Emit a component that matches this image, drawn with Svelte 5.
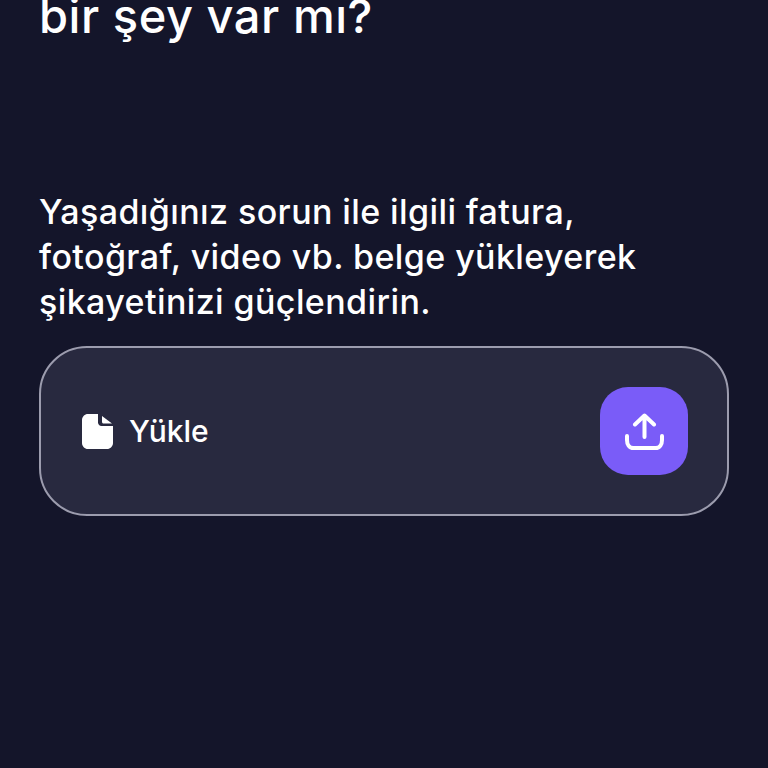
<script>
  const lines = ['Yaşadığınız sorun ile ilgili fatura,', 'fotoğraf, video vb. belge yükleyerek', 'şikayetinizi güçlendirin.'];
</script>

<main class="page">
  <h1 class="title">bir şey var mı?</h1>
  <p class="lead">
    {#each lines as line}
      <span class="line">{line}</span>
    {/each}
  </p>
  <div class="upload">
    <div class="label">
      <svg class="file" viewBox="0 0 31 35" width="31" height="35" aria-hidden="true">
        <path fill="#fff" d="M6 0H16V8.500C16 10.400 17.600 12 19.500 12H31V29C31 32.300 28.300 35 25 35H6C2.700 35 0 32.300 0 29V6C0 2.700 2.700 0 6 0Z"/>
        <path fill="#fff" d="M20 2L30 9.500H21.500C20.700 9.500 20 8.800 20 8Z"/>
      </svg>
      <span class="text">Yükle</span>
    </div>
    <button class="btn" aria-label="Yükle">
      <svg viewBox="0 0 39 37" width="39" height="37" fill="none" stroke="#fff" stroke-width="4" stroke-linecap="round" stroke-linejoin="round" aria-hidden="true">
        <path d="M19.500 24V3M10 11.500L19.500 2.500L29 11.500"/>
        <path d="M2 23V27C2 31 4 35 8.500 35H30.500C35 35 37 31 37 27V23"/>
      </svg>
    </button>
  </div>
</main>

<style>
  :global(body) {
    margin: 0;
    background: #14152a;
  }
  .page {
    height: 768px;
    box-sizing: border-box;
    padding: 0 39px;
    overflow: hidden;
    background: #14152a;
    color: #fff;
    font-family: Inter, "Noto Sans", sans-serif;
  }
  .title {
    margin: -12px 0 0;
    font-size: 47px;
    line-height: 56px;
    font-weight: 500;
    letter-spacing: 0.55px;
  }
  .lead {
    margin: 145px 0 0;
    font-size: 34px;
    line-height: 45px;
    font-weight: 500;
    letter-spacing: 0.4px;
  }
  .line {
    display: block;
    white-space: nowrap;
  }
  .upload {
    margin-top: 22px;
    height: 170px;
    width: 690px;
    box-sizing: border-box;
    display: flex;
    align-items: center;
    justify-content: space-between;
    padding: 0 39px 0 41px;
    background: #28293f;
    border: 2px solid #9c9cae;
    border-radius: 48px;
  }
  .label {
    display: flex;
    align-items: center;
    gap: 16px;
  }
  .file {
    display: block;
  }
  .text {
    font-size: 30px;
    font-weight: 500;
  }
  .btn {
    width: 88px;
    height: 88px;
    padding: 0;
    border: 0;
    border-radius: 28px;
    background: #7a5cf8;
    display: flex;
    align-items: center;
    justify-content: center;
  }
</style>
